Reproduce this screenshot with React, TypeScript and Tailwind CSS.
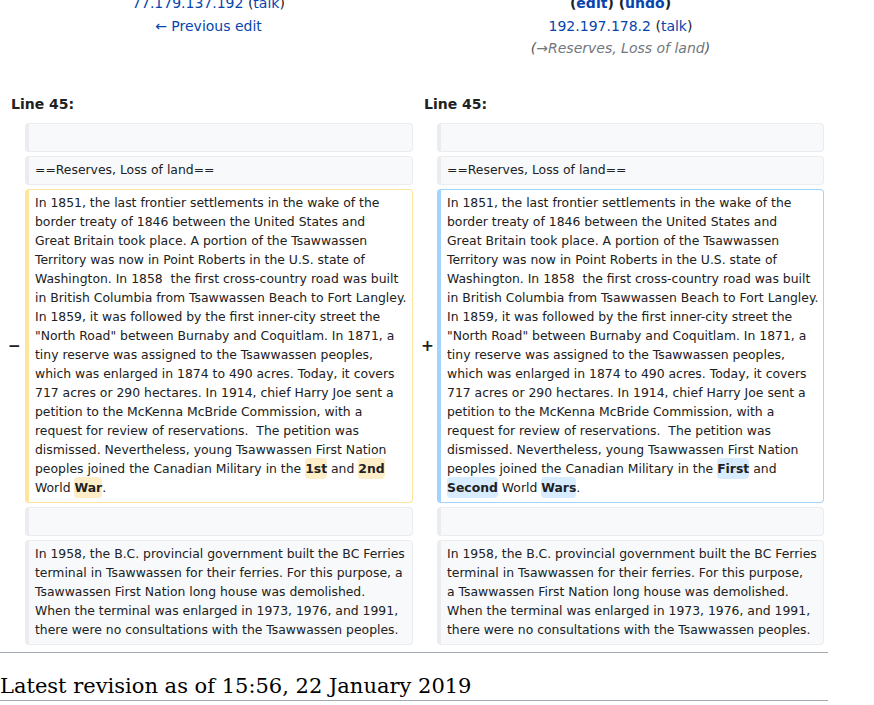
import React from "react";

type Kind = "context" | "del" | "ins";

const cellTone: Record<Kind, string> = {
  context: "bg-[#f8f9fa] border-[#eaecf0]",
  del: "bg-white border-[#ffe49c]",
  ins: "bg-white border-[#a3d3ff]",
};

// lines are kept as the wiki diff wraps them
const Cell: React.FC<{ kind: Kind; children?: React.ReactNode }> = ({ kind, children }) => (
  <div
    className={`rounded-[4px] border border-l-4 px-[6px] pt-[3px] pb-[5px] text-[12.4px] leading-[19px] whitespace-pre text-[#202122] ${cellTone[kind]}`}
  >
    {children ?? <br />}
  </div>
);

const Marker: React.FC<{ sign?: string }> = ({ sign }) => (
  <div className="flex items-center pl-[4px] text-[15.4px] leading-[1.2] font-bold text-[#202122] whitespace-nowrap">
    {sign}
  </div>
);

const DelWord: React.FC<{ children: React.ReactNode }> = ({ children }) => (
  <span className="bg-[#feeec8] font-bold rounded-[4px] py-[3px]">{children}</span>
);

const InsWord: React.FC<{ children: React.ReactNode }> = ({ children }) => (
  <span className="bg-[#d8ecff] font-bold rounded-[4px] py-[3px]">{children}</span>
);

const Link: React.FC<{ children: React.ReactNode }> = ({ children }) => (
  <a className="text-[#0645ad] no-underline cursor-pointer">{children}</a>
);

const body = [
  "In 1851, the last frontier settlements in the wake of the",
  "border treaty of 1846 between the United States and",
  "Great Britain took place. A portion of the Tsawwassen",
  "Territory was now in Point Roberts in the U.S. state of",
  "Washington. In 1858  the first cross-country road was built",
  "in British Columbia from Tsawwassen Beach to Fort Langley.",
  "In 1859, it was followed by the first inner-city street the",
  "\"North Road\" between Burnaby and Coquitlam. In 1871, a",
  "tiny reserve was assigned to the Tsawwassen peoples,",
  "which was enlarged in 1874 to 490 acres. Today, it covers",
  "717 acres or 290 hectares. In 1914, chief Harry Joe sent a",
  "petition to the McKenna McBride Commission, with a",
  "request for review of reservations.  The petition was",
  "dismissed. Nevertheless, young Tsawwassen First Nation",
  "peoples joined the Canadian Military in the ",
].join("\n");

const ferriesOld = [
  "In 1958, the B.C. provincial government built the BC Ferries",
  "terminal in Tsawwassen for their ferries. For this purpose, a",
  "Tsawwassen First Nation long house was demolished.",
  "When the terminal was enlarged in 1973, 1976, and 1991,",
  "there were no consultations with the Tsawwassen peoples.",
].join("\n");

const ferriesNew = [
  "In 1958, the B.C. provincial government built the BC Ferries",
  "terminal in Tsawwassen for their ferries. For this purpose,",
  "a Tsawwassen First Nation long house was demolished.",
  "When the terminal was enlarged in 1973, 1976, and 1991,",
  "there were no consultations with the Tsawwassen peoples.",
].join("\n");

export default function App() {
  return (
    <div className="w-[874px] h-[705px] overflow-hidden bg-white font-['DejaVu_Sans',sans-serif] text-[#202122]">
      <div className="w-[828px] -mt-[30px]">
        <div className="grid grid-cols-[17px_388px_16px_387px] gap-[4px] px-[4px] pb-[4px]">
          {/* titles */}
          <div className="col-span-2 text-center text-[14px] leading-[22.4px]">
            <div className="font-bold">
              Revision as of 17:48, 21 January 2019 (<Link>edit</Link>)
            </div>
            <div>
              <Link>77.179.137.192</Link> (<Link>talk</Link>)
            </div>
            <div>
              <Link>← Previous edit</Link>
            </div>
          </div>
          <div className="col-span-2 text-center text-[14px] leading-[22.4px]">
            <div className="font-bold">Latest revision as of 15:56, 22 January 2019</div>
            <div className="font-bold">
              (<Link>edit</Link>) (<Link>undo</Link>)
            </div>
            <div>
              <Link>192.197.178.2</Link> (<Link>talk</Link>)
            </div>
            <div className="italic text-[#54595d]">
              (<span className="text-[#72777d]">→Reserves, Loss of land</span>)
            </div>
            <div>&nbsp;</div>
          </div>

          {/* line numbers */}
          <div className="col-span-2 px-[7px] pt-[7px] pb-[4px] text-[14px] leading-[22.4px] font-bold">Line 45:</div>
          <div className="col-span-2 px-[7px] pt-[7px] pb-[4px] text-[14px] leading-[22.4px] font-bold">Line 45:</div>

          <Marker />
          <Cell kind="context" />
          <Marker />
          <Cell kind="context" />

          <Marker />
          <Cell kind="context">==Reserves, Loss of land==</Cell>
          <Marker />
          <Cell kind="context">==Reserves, Loss of land==</Cell>

          <Marker sign="−" />
          <Cell kind="del">
            {body}
            <DelWord>1st</DelWord> and <DelWord>2nd</DelWord>
            {"\nWorld "}
            <DelWord>War</DelWord>.
          </Cell>
          <Marker sign="+" />
          <Cell kind="ins">
            {body}
            <InsWord>First</InsWord> and{"\n"}
            <InsWord>Second</InsWord> World <InsWord>Wars</InsWord>.
          </Cell>

          <Marker />
          <Cell kind="context" />
          <Marker />
          <Cell kind="context" />

          <Marker />
          <Cell kind="context">{ferriesOld}</Cell>
          <Marker />
          <Cell kind="context">{ferriesNew}</Cell>
        </div>

        <hr className="h-px bg-[#a2a9b1] border-0 my-[2.8px]" />

        <h2 className="mt-[21px] font-['DejaVu_Serif',serif] text-[21px] leading-[25.3px] font-normal border-b border-[#a2a9b1] text-black">
          Latest revision as of 15:56, 22 January 2019
        </h2>
      </div>
    </div>
  );
}
